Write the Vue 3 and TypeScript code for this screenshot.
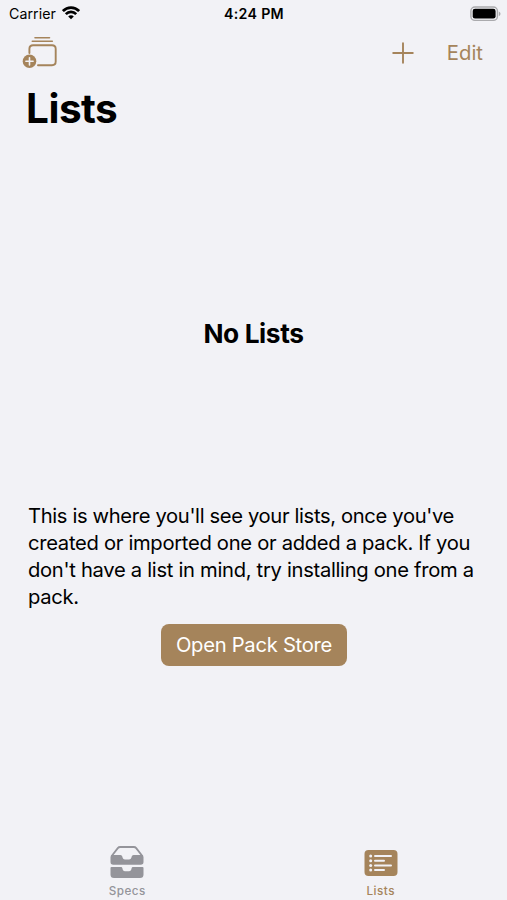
<script setup lang="ts">
import { ref } from 'vue'

type Tab = 'specs' | 'lists'
const activeTab = ref<Tab>('lists')
const description: string[] = [
  "This is where you'll see your lists, once you've",
  'created or imported one or added a pack. If you',
  "don't have a list in mind, try installing one from a",
  'pack.',
]
const rows: { y: number; width: number }[] = [
  { y: 6, width: 18 },
  { y: 10.7, width: 11 },
  { y: 15.4, width: 18 },
  { y: 20, width: 11 },
]
</script>

<template>
  <div class="screen">
    <header class="status">
      <div class="carrier">
        <span>Carrier</span>
        <svg class="wifi" width="18" height="14" viewBox="0 0 18 14" fill="none" stroke="#000" stroke-width="2.7">
          <path d="M.9 5.1C5.4.4 12.6.4 17.1 5.1" />
          <path d="M3.8 8.1C6.7 5.2 11.3 5.2 14.2 8.1" />
          <path d="M6.2 10.4C7.8 8.8 10.2 8.8 11.8 10.4L9 13.2Z" fill="#000" stroke="none" />
        </svg>
      </div>
      <span class="time">4:24 PM</span>
      <svg class="battery" width="31" height="16" viewBox="0 0 31 16">
        <rect x=".9" y="1" width="26.5" height="13.4" rx="4" fill="#f2f2f6" stroke="#aaaaad" stroke-width="1.4" />
        <rect x="2.7" y="2.8" width="22.9" height="9.8" rx="2.3" fill="#000" />
        <path d="M28.8 5.4C31 6.2 31 9.2 28.8 10Z" fill="#aaaaad" />
      </svg>
    </header>

    <nav class="toolbar">
      <button class="icon-button" aria-label="Add pack">
        <svg width="36" height="34" viewBox="0 0 36 34" fill="none" stroke="#a5845b" stroke-linecap="round">
          <path d="M13 1.7H27.5M10.3 5.2H30.3" stroke-width="1.6" />
          <path d="M7.4 17V13Q7.4 9.3 11.1 9.3H30Q33.7 9.3 33.7 13V25.5Q33.7 29.2 30 29.2H16" stroke-width="1.9" />
          <circle cx="7.5" cy="25.3" r="6.8" fill="#a5845b" stroke="none" />
          <path d="M3.9 25.3H11.1M7.5 21.7V28.9" stroke="#f2f2f6" stroke-width="1.6" />
        </svg>
      </button>
      <div class="actions">
        <button class="icon-button" aria-label="Add list">
          <svg width="22" height="22" viewBox="0 0 22 22" stroke="#a5845b" stroke-width="1.9" stroke-linecap="round">
            <path d="M1.2 11H20.8M11 1.2V20.8" />
          </svg>
        </button>
        <button class="edit">Edit</button>
      </div>
    </nav>

    <h1>Lists</h1>

    <main>
      <h2>No Lists</h2>
      <p>
        <span v-for="line in description" :key="line" class="line">{{ line }}</span>
      </p>
      <button class="store">Open Pack Store</button>
    </main>

    <footer class="tabs">
      <button class="tab" :class="{ active: activeTab === 'specs' }" @click="activeTab = 'specs'">
        <svg width="34" height="34" viewBox="0 0 34 34" fill="currentColor">
          <path d="M1.5 11.3L7.8 3.1Q8.7 2 10.2 2H23.8Q25.3 2 26.2 3.1L32.5 11.3" fill="none" stroke="currentColor" stroke-width="1.8" />
          <path d="M2.5 10H10.5Q12 10 12.3 11.5Q12.8 14.5 15 14.5H19Q21.2 14.5 21.7 11.5Q22 10 23.5 10H31.5Q33.5 10 33.5 12V17Q33.5 19.8 30.7 19.8H3.3Q.5 19.8 .5 17V12Q.5 10 2.5 10Z" />
          <path d="M1.5 22H11Q12.2 22 12.4 23.3Q12.8 26.3 15 26.3H19Q21.2 26.3 21.6 23.3Q21.8 22 23 22H32.5Q33.5 22 33.5 23V29.5Q33.5 33 30 33H4Q.5 33 .5 29.5V23Q.5 22 1.5 22Z" />
        </svg>
        <span>Specs</span>
      </button>
      <button class="tab" :class="{ active: activeTab === 'lists' }" @click="activeTab = 'lists'">
        <svg width="34" height="34" viewBox="0 -5 34 34">
          <rect x=".5" width="33" height="26" rx="4" fill="currentColor" />
          <g v-for="row in rows" :key="row.y" fill="#f2f2f6">
            <circle cx="6.7" :cy="row.y" r="1.5" />
            <rect x="10" :y="row.y - 1" :width="row.width" height="2" rx="1" />
          </g>
        </svg>
        <span>Lists</span>
      </button>
    </footer>
  </div>
</template>

<style>
body {
  background: #f2f2f6;
}
</style>

<style scoped>
.screen {
  display: flex;
  flex-direction: column;
  width: 507px;
  height: 900px;
  overflow: hidden;
  background: #f2f2f6;
  color: #000;
  font-family: Inter, "Liberation Sans", sans-serif;
}
button {
  padding: 0;
  border: 0;
  background: none;
  color: #a5845b;
  font: inherit;
}
svg {
  display: block;
  flex: none;
}
.status {
  display: grid;
  grid-template-columns: 1fr auto 1fr;
  align-items: center;
  height: 28px;
  padding: 0 6px 0 9px;
  font-size: 14.2px;
  line-height: 28px;
}
.carrier {
  display: flex;
  align-items: center;
  gap: 6px;
  letter-spacing: 0.05px;
}
.wifi {
  margin-bottom: 2px;
}
.time {
  margin-right: 2px;
  font-weight: 600;
  letter-spacing: 0.3px;
}
.battery {
  justify-self: end;
  margin-bottom: 1px;
}
.toolbar {
  display: flex;
  justify-content: space-between;
  align-items: center;
  height: 50px;
  padding: 0 24px 0 22px;
}
.actions {
  display: flex;
  align-items: center;
  gap: 33px;
}
.edit {
  font-size: 20.3px;
  line-height: 28px;
}
h1 {
  margin: 6px 0 0 26px;
  font-size: 40.5px;
  line-height: 50px;
  font-weight: 700;
  letter-spacing: -0.5px;
}
main {
  display: flex;
  flex-direction: column;
  align-items: center;
}
h2 {
  margin: 183px 0 0;
  font-size: 26.3px;
  line-height: 34px;
  font-weight: 700;
  letter-spacing: -0.4px;
}
p {
  align-self: stretch;
  margin: 151px 0 0 28px;
  font-size: 20.2px;
  line-height: 27px;
  letter-spacing: -0.3px;
}
.line {
  display: block;
  white-space: nowrap;
}
.line:first-child {
  letter-spacing: -0.35px;
}
.store {
  width: 186px;
  height: 42px;
  margin-top: 14px;
  padding-left: 1px;
  border-radius: 8px;
  background: #a5845b;
  color: #fff;
  font-size: 20.2px;
  line-height: 42px;
  letter-spacing: -0.27px;
}
.tabs {
  display: grid;
  grid-template-columns: 1fr 1fr;
  margin-top: auto;
  height: 55px;
}
.tab {
  display: flex;
  flex-direction: column;
  align-items: center;
  padding-left: 1px;
  color: #94949a;
  font-size: 11.7px;
  font-weight: 500;
  line-height: 16px;
  letter-spacing: 0.5px;
}
.tab span {
  margin-top: 4px;
}
.tab.active {
  color: #a5845b;
}
</style>
